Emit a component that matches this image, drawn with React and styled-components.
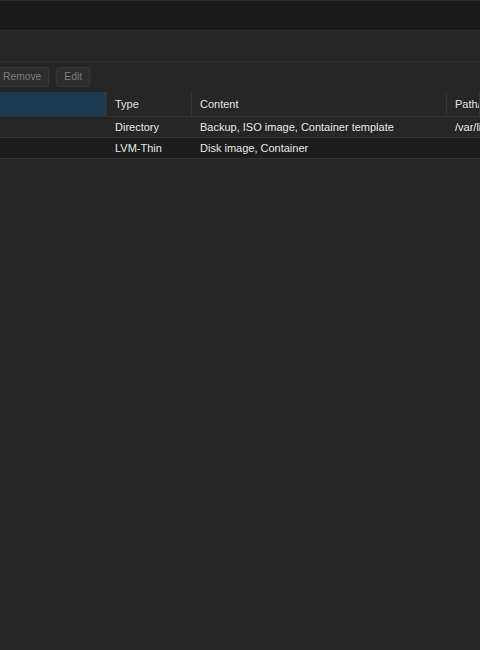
import React from "react";
import styled, { createGlobalStyle } from "styled-components";

const Global = createGlobalStyle`
  html, body { margin: 0; padding: 0; background: #262626; }
  body { font-family: "Liberation Sans", Arial, sans-serif; overflow: hidden; }
`;

const Page = styled.div`
  width: 480px;
  height: 650px;
  display: flex;
  flex-direction: column;
  background: #262626;
  overflow: hidden;
`;

const TopBar = styled.div`
  height: 29px;
  flex: none;
  background: #1b1b1b;
  border-top: 1px solid #2a2a2a;
  border-bottom: 1px solid #2f2f2f;
`;

const PanelHeader = styled.div`
  height: 30px;
  flex: none;
  background: #262626;
  border-bottom: 1px solid #2f2f2f;
`;

const Toolbar = styled.div`
  height: 30px;
  flex: none;
  display: flex;
  align-items: center;
  gap: 7px;
  background: #262626;
`;

const Button = styled.button`
  height: 20px;
  padding: 0 7px;
  margin-left: ${(p) => (p.$first ? "-5px" : "0")};
  background: #2d2d2d;
  border: 1px solid #363636;
  border-radius: 3px;
  color: #7b7b7b;
  font-family: "Liberation Sans", Arial, sans-serif;
  font-size: 10.3px;
  line-height: 18px;
  cursor: default;
`;

const Grid = styled.div`
  display: grid;
  grid-template-columns: 107px 85px 255px 1fr;
  flex: none;
`;

const HeadCell = styled.div`
  height: 24px;
  box-sizing: border-box;
  display: flex;
  align-items: center;
  padding-left: 8px;
  background: ${(p) => (p.$active ? "#1e3a4f" : "#262626")};
  border-right: 1px solid #333;
  border-bottom: 1px solid #333;
  color: #e2e2e2;
  font-size: 11px;
  white-space: nowrap;
  overflow: hidden;
  height: 25px;
`;

const Cell = styled.div`
  height: 21px;
  box-sizing: border-box;
  display: flex;
  align-items: center;
  padding-left: 8px;
  background: ${(p) => (p.$alt ? "#1d1d1d" : "#262626")};
  border-bottom: 1px solid #313131;
  color: #e6e6e6;
  font-size: 11px;
  white-space: nowrap;
  overflow: hidden;
`;

const rows = [
  ["", "Directory", "Backup, ISO image, Container template", "/var/lib/vz"],
  ["", "LVM-Thin", "Disk image, Container", ""],
];

export default function App() {
  return (
    <Page>
      <Global />
      <TopBar />
      <PanelHeader />
      <Toolbar>
        <Button $first>Remove</Button>
        <Button>Edit</Button>
      </Toolbar>
      <Grid>
        <HeadCell $active />
        <HeadCell>Type</HeadCell>
        <HeadCell>Content</HeadCell>
        <HeadCell>Path/Target</HeadCell>
        {rows.map((r, i) =>
          r.map((c, j) => (
            <Cell key={`${i}-${j}`} $alt={i % 2 === 1}>
              {c}
            </Cell>
          ))
        )}
      </Grid>
    </Page>
  );
}
